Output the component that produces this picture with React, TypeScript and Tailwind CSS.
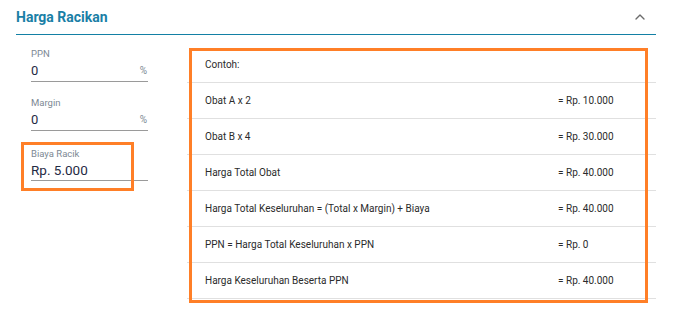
import React from "react";
import { ChevronUp } from "lucide-react";

const rows: [string, string][] = [
  ["Contoh:", ""],
  ["Obat A x 2", "= Rp. 10.000"],
  ["Obat B x 4", "= Rp. 30.000"],
  ["Harga Total Obat", "= Rp. 40.000"],
  ["Harga Total Keseluruhan = (Total x Margin) + Biaya", "= Rp. 40.000"],
  ["PPN = Harga Total Keseluruhan x PPN", "= Rp. 0"],
  ["Harga Keseluruhan Beserta PPN", "= Rp. 40.000"],
];

export default function App() {
  return (
    <div
      className="relative w-[679px] h-[315px] bg-white overflow-hidden"
      style={{ fontFamily: "Roboto, 'Liberation Sans', sans-serif" }}
    >
      <div className="mx-4 w-[640px]">
        <div className="h-[35px] flex items-center justify-between border-b border-[#1380a5]">
          <span className="text-[14px] font-bold text-[#1a7fa6] leading-none">
            Harga Racikan
          </span>
          <ChevronUp size={16} strokeWidth={2} className="text-[#6b6b6b] mr-[8px] -mt-[1px]" />
        </div>
        <div className="flex">
          <div className="ml-[15px] w-[117px]">
            <div className="pt-[13px]">
              <div className="h-3 text-[9.5px] leading-3 text-[#7d8994]">PPN</div>
              <div className="h-[22px] flex items-center justify-between border-b border-[#9a9a9a]">
                <span className="text-[13px] text-[#1f2a44]">0</span>
                <span className="text-[10px] text-[#7d8994] mr-[1px]">%</span>
              </div>
            </div>
            <div className="pt-[15px]">
              <div className="h-3 text-[9.5px] leading-3 text-[#7d8994]">Margin</div>
              <div className="h-[22px] flex items-center justify-between border-b border-[#9a9a9a]">
                <span className="text-[13px] text-[#1f2a44]">0</span>
                <span className="text-[10px] text-[#7d8994] mr-[1px]">%</span>
              </div>
            </div>
            <div className="pt-[17px]">
              <div className="h-3 text-[9.5px] leading-3 text-[#7d8994]">Biaya Racik</div>
              <div className="h-[21px] flex items-center border-b border-[#9a9a9a]">
                <span className="text-[13.5px] text-[#1f2a44] leading-5 -mt-[1px]">Rp. 5.000</span>
              </div>
            </div>
          </div>
          <div className="ml-[39px] mt-[12px] w-[469px]">
            {rows.map(([l, r], i) => (
              <div
                key={i}
                className="h-9 flex items-center border-b border-[#e0e0e0] pl-[18px] text-[10px] text-[#2b2b2b]"
              >
                <span className="w-[353px]">{l}</span>
                <span>{r}</span>
              </div>
            ))}
          </div>
        </div>
      </div>
      <div className="absolute left-[21px] top-[142px] w-[113px] h-[49px] border-[3px] border-[#ff7f27]" />
      <div className="absolute left-[189px] top-[48px] w-[459px] h-[255px] border-[3px] border-[#ff7f27]" />
    </div>
  );
}
